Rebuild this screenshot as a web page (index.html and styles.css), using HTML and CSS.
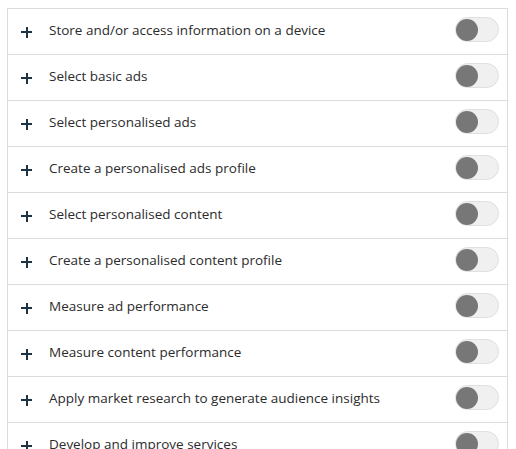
FILE: index.html
```html
<!DOCTYPE html>
<html>
<head>
<meta charset="utf-8">
<link rel="stylesheet" href="styles.css">
</head>
<body>
<div class="list">
  <div class="row"><span class="plus"></span><span class="label">Store and/or access information on a device</span><span class="toggle"><span class="knob"></span></span></div>
  <div class="row"><span class="plus"></span><span class="label">Select basic ads</span><span class="toggle"><span class="knob"></span></span></div>
  <div class="row"><span class="plus"></span><span class="label">Select personalised ads</span><span class="toggle"><span class="knob"></span></span></div>
  <div class="row"><span class="plus"></span><span class="label">Create a personalised ads profile</span><span class="toggle"><span class="knob"></span></span></div>
  <div class="row"><span class="plus"></span><span class="label">Select personalised content</span><span class="toggle"><span class="knob"></span></span></div>
  <div class="row"><span class="plus"></span><span class="label">Create a personalised content profile</span><span class="toggle"><span class="knob"></span></span></div>
  <div class="row"><span class="plus"></span><span class="label">Measure ad performance</span><span class="toggle"><span class="knob"></span></span></div>
  <div class="row"><span class="plus"></span><span class="label">Measure content performance</span><span class="toggle"><span class="knob"></span></span></div>
  <div class="row"><span class="plus"></span><span class="label">Apply market research to generate audience insights</span><span class="toggle"><span class="knob"></span></span></div>
  <div class="row"><span class="plus"></span><span class="label">Develop and improve services</span><span class="toggle"><span class="knob"></span></span></div>
</div>
</body>
</html>
```
FILE: styles.css
```css
html, body { margin: 0; padding: 0; background: #fff; }
body {
  padding: 8px 0 0 7px;
  font-family: "Open Sans", "Noto Sans", sans-serif;
  overflow: hidden;
  height: 449px;
  box-sizing: border-box;
}
.list {
  width: 501px;
  border: 1px solid #dcdcdc;
  border-bottom: none;
  box-sizing: border-box;
}
.row {
  display: flex;
  align-items: center;
  height: 46px;
  border-bottom: 1px solid #dcdcdc;
  box-sizing: border-box;
  padding: 0 8px 4px 13px;
}
.plus {
  position: relative;
  width: 11px;
  height: 11px;
  flex: none;
  margin-right: 17px;
  margin-top: 5px;
}
.plus::before, .plus::after {
  content: "";
  position: absolute;
  background: #1e3445;
}
.plus::before { left: 0; right: 0; top: 4.5px; height: 2px; }
.plus::after { top: 0; bottom: 0; left: 4.5px; width: 2px; }
.label {
  flex: 1;
  font-size: 13.5px;
  color: #2b2b2b;
}
.toggle {
  width: 44px;
  height: 25px;
  border-radius: 13px;
  background: #f0f0f0;
  border: 1px solid #e0e0e0;
  box-sizing: border-box;
  display: flex;
  align-items: center;
  flex: none;
}
.knob {
  width: 22px;
  height: 22px;
  border-radius: 50%;
  background: #777;
}
```
